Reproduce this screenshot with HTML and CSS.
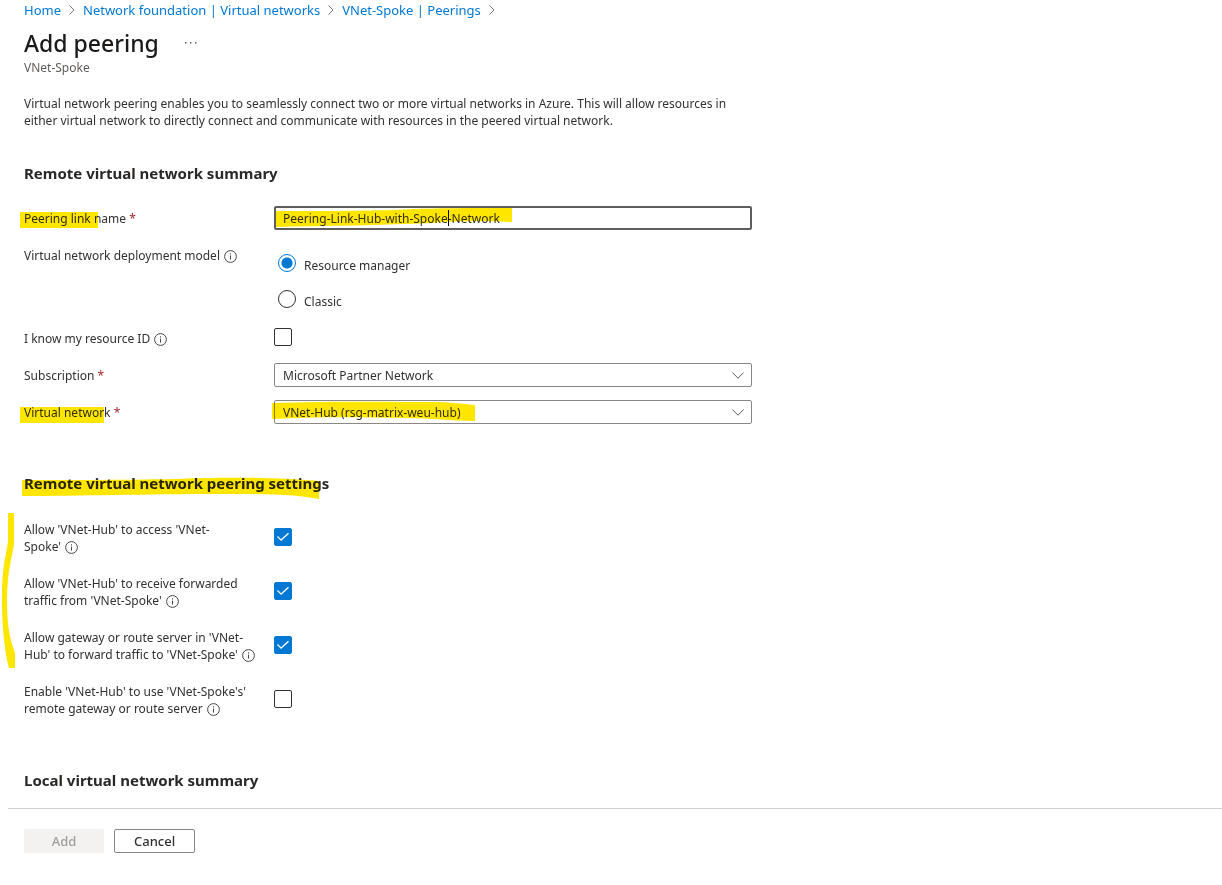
FILE: index.html
```
<!DOCTYPE html>
<html lang="en">
<head>
    <meta charset="UTF-8">
    <meta name="viewport" content="width=device-width, initial-scale=1.0">
    <title>Add peering</title>
    <link rel="stylesheet" href="styles.css">
</head>
<body>
    <!-- Shared icons -->
    <svg class="icon-defs" aria-hidden="true">
        <symbol id="info" viewBox="0 0 13 13">
            <circle cx="6.5" cy="6.5" r="5.9" fill="none" stroke="currentColor" />
            <path d="M6.5 5.6v4M6.5 3.3v1.2" fill="none" stroke="currentColor" />
        </symbol>
        <symbol id="chevron-right" viewBox="0 0 6 10">
            <path d="M0.5 0.5L5 5L0.5 9.5" fill="none" stroke="currentColor" />
        </symbol>
        <symbol id="chevron-down" viewBox="0 0 12 7">
            <path d="M0.4 0.5L6 6.2L11.6 0.5" fill="none" stroke="currentColor" />
        </symbol>
    </svg>

    <main class="content">
        <nav class="breadcrumb" aria-label="Breadcrumb">
            <a href="#">Home</a>
            <svg class="separator"><use href="#chevron-right" /></svg>
            <a href="#">Network foundation | Virtual networks</a>
            <svg class="separator"><use href="#chevron-right" /></svg>
            <a href="#">VNet-Spoke | Peerings</a>
            <svg class="separator"><use href="#chevron-right" /></svg>
        </nav>

        <header class="title-bar">
            <h1>Add peering</h1>
            <button class="more" type="button" aria-label="More actions">
                <svg viewBox="0 0 12 2"><path d="M0 0h1.5v1.5H0zM5 0h1.5v1.5H5zM10 0h1.5v1.5H10z" fill="currentColor" /></svg>
            </button>
        </header>
        <p class="subtitle">VNet-Spoke</p>

        <p class="description">Virtual network peering enables you to seamlessly connect two or more virtual networks in Azure. This will allow resources in either virtual network to directly connect and communicate with resources in the peered virtual network.</p>

        <form id="peeringForm">
            <h2>Remote virtual network summary</h2>
            <div class="summary-fields">
                <div class="row">
                    <label class="row-label" for="linkName">Peering link name <span class="required">*</span>
                        <svg class="marker marker-label" viewBox="0 0 84 18"><path d="M0 1H78V17H0Z" /></svg>
                    </label>
                    <div class="field">
                        <input class="text-box" id="linkName" type="text" value="Peering-Link-Hub-with-Spoke-Network">
                        <span class="caret"></span>
                        <svg class="marker marker-name" viewBox="0 0 238 22"><path d="M1 5C50 5 80 5 117 4C160 2 190 2 237 2V16C200 15 175 15 157 17C110 19 50 20 1 21Z" /></svg>
                    </div>
                </div>

                <div class="row" role="radiogroup" aria-labelledby="modelLabel">
                    <span class="row-label" id="modelLabel">Virtual network deployment model <svg class="info"><use href="#info" /></svg></span>
                    <div class="radio-group">
                        <label class="radio"><input type="radio" name="model" checked><span>Resource manager</span></label>
                        <label class="radio"><input type="radio" name="model"><span>Classic</span></label>
                    </div>
                </div>

                <div class="row">
                    <label class="row-label" for="resourceId">I know my resource ID <svg class="info"><use href="#info" /></svg></label>
                    <div class="field check-field"><input class="check" id="resourceId" type="checkbox"></div>
                </div>

                <div class="row">
                    <label class="row-label" for="subscription">Subscription <span class="required">*</span></label>
                    <div class="field">
                        <select class="drop-down" id="subscription"><option>Microsoft Partner Network</option></select>
                        <svg class="arrow"><use href="#chevron-down" /></svg>
                    </div>
                </div>

                <div class="row">
                    <label class="row-label" for="network">Virtual network <span class="required">*</span>
                        <svg class="marker marker-label" viewBox="0 0 84 18"><path d="M0 2H84V18H0Z" /></svg>
                    </label>
                    <div class="field">
                        <select class="drop-down" id="network"><option>VNet-Hub (rsg-matrix-weu-hub)</option></select>
                        <svg class="arrow"><use href="#chevron-down" /></svg>
                        <svg class="marker marker-network" viewBox="0 0 204 20"><path d="M0 2C60 0 120 1 160 1C180 1 190 3 203 4V20C180 20 160 17 130 17C80 16 40 16 0 18Z" /></svg>
                    </div>
                </div>
            </div>

            <h2>Remote virtual network peering settings
                <svg class="marker marker-heading" viewBox="0 0 298 22"><path d="M0 3C80 3 130 3 180 1C230 0 260 1 297 4V22C270 17 240 17 200 17C120 17 60 19 0 19Z" /></svg>
            </h2>
            <div class="settings-fields">
                <svg class="marker marker-bracket" viewBox="0 0 16 156"><path d="M8 0H14V31C12 44 7 60 7 86C7 110 9 124 15 140V155H9C6 144 2 120 2 86C2 52 6 44 8 28Z" /></svg>
                <div class="row">
                    <label class="row-label" for="allowAccess">Allow 'VNet-Hub' to access 'VNet-<br>Spoke' <svg class="info"><use href="#info" /></svg></label>
                    <div class="field"><input class="check" id="allowAccess" type="checkbox" checked></div>
                </div>
                <div class="row">
                    <label class="row-label" for="allowForwarded">Allow 'VNet-Hub' to receive forwarded<br>traffic from 'VNet-Spoke' <svg class="info"><use href="#info" /></svg></label>
                    <div class="field"><input class="check" id="allowForwarded" type="checkbox" checked></div>
                </div>
                <div class="row">
                    <label class="row-label" for="allowGateway">Allow gateway or route server in 'VNet-<br>Hub' to forward traffic to 'VNet-Spoke' <svg class="info"><use href="#info" /></svg></label>
                    <div class="field"><input class="check" id="allowGateway" type="checkbox" checked></div>
                </div>
                <div class="row">
                    <label class="row-label" for="useGateway">Enable 'VNet-Hub' to use 'VNet-Spoke's'<br>remote gateway or route server <svg class="info"><use href="#info" /></svg></label>
                    <div class="field"><input class="check" id="useGateway" type="checkbox"></div>
                </div>
            </div>

            <h2>Local virtual network summary</h2>
        </form>
    </main>

    <footer class="actions">
        <button class="btn" type="submit" form="peeringForm" disabled>Add</button>
        <button class="btn" type="button">Cancel</button>
    </footer>
</body>
</html>
```
FILE: styles.css
```
* {
    box-sizing: border-box;
}
body {
    margin: 0;
    height: 100vh;
    display: flex;
    flex-direction: column;
    background-color: #fff;
    color: #323130;
    font-family: "Segoe UI", "Noto Sans", sans-serif;
    font-size: 12px;
    line-height: 17px;
}
h1, h2, p {
    margin: 0;
}
input, select, button {
    margin: 0;
    font: inherit;
    color: inherit;
}
.icon-defs {
    display: none;
}
.content {
    flex: 1;
    min-height: 0;
    overflow: hidden;
    padding: 0 24px;
}

/* Header */
.breadcrumb {
    display: flex;
    align-items: center;
    gap: 8px;
    height: 20px;
    font-size: 13px;
}
.breadcrumb a {
    color: #0078d4;
    text-decoration: none;
}
.separator {
    width: 6px;
    height: 10px;
    color: #797775;
}
.title-bar {
    display: flex;
    align-items: center;
    gap: 24px;
    padding-top: 7px;
}
h1 {
    font-size: 23px;
    font-weight: 500;
    line-height: 32px;
    color: #1b1a19;
}
.more {
    display: flex;
    padding: 2px;
    border: none;
    background: none;
    color: #605e5c;
}
.more svg {
    width: 12px;
    height: 2px;
}
.subtitle {
    font-size: 12px;
    color: #605e5c;
}
.description {
    max-width: 728px;
    padding-top: 19px;
}

/* Form */
h2 {
    position: relative;
    font-size: 15px;
    font-weight: 700;
    line-height: 20px;
    color: #292827;
    margin: 34px 0 23px;
}
.summary-fields {
    display: grid;
    gap: 13px;
    margin-bottom: 49px;
}
.settings-fields {
    position: relative;
    display: grid;
    gap: 20px;
    margin: 28px 0 53px;
}
.row {
    display: grid;
    grid-template-columns: 242px minmax(0, 478px);
    column-gap: 8px;
}
.row-label {
    position: relative;
    white-space: nowrap;
}
.summary-fields .row-label {
    padding-top: 4px;
}
.required {
    color: #a4262c;
}
.info {
    width: 13px;
    height: 13px;
    margin-left: 1px;
    vertical-align: -3px;
    color: #484644;
}
.field {
    position: relative;
    display: flex;
    align-items: center;
}
.settings-fields .field {
    padding-bottom: 2px;
}
.check-field {
    min-height: 24px;
    padding-bottom: 2px;
}
.text-box,
.drop-down {
    width: 100%;
    height: 24px;
    border: 1px solid #8a8886;
    border-radius: 2px;
    padding: 0 8px;
    background-color: #fff;
    appearance: none;
    outline: none;
}
.text-box {
    border: 2px solid #605e5c;
    padding: 0 7px;
}
.arrow {
    position: absolute;
    right: 8px;
    top: 9px;
    width: 12px;
    height: 7px;
    color: #605e5c;
    pointer-events: none;
}
.caret {
    position: absolute;
    left: 174px;
    top: 4px;
    width: 1px;
    height: 16px;
    background-color: #000;
}
.radio-group {
    display: grid;
    gap: 18px;
    padding: 11px 4px 5px;
}
.radio {
    display: flex;
    gap: 8px;
    height: 18px;
    line-height: 23px;
}
.radio input {
    flex: none;
    width: 18px;
    height: 18px;
    border: 1px solid #323130;
    border-radius: 50%;
    appearance: none;
}
.radio input:checked {
    border-color: #0078d4;
    background: radial-gradient(circle, #0078d4 5px, #fff 6px);
}
.check {
    width: 18px;
    height: 18px;
    border: 1px solid #323130;
    border-radius: 2px;
    appearance: none;
}
.check:checked {
    display: grid;
    place-items: center;
    border-color: #0078d4;
    background-color: #0078d4;
}
.check:checked::before {
    content: "";
    width: 12px;
    height: 9px;
    background-color: #fff;
    clip-path: polygon(0 50%, 8% 40%, 34% 76%, 92% 4%, 100% 13%, 34% 94%);
}

/* Highlighter strokes drawn over the form */
.marker {
    position: absolute;
    fill: #ffe600;
    mix-blend-mode: multiply;
    pointer-events: none;
}
.marker-label {
    left: -4px;
    top: 5px;
    width: 84px;
    height: 18px;
}
.marker-name {
    left: 1px;
    top: 0;
    width: 238px;
    height: 22px;
}
.marker-network {
    left: -2px;
    top: 1px;
    width: 204px;
    height: 20px;
}
.marker-heading {
    left: -2px;
    top: 4px;
    width: 298px;
    height: 22px;
}
.marker-bracket {
    left: -24px;
    top: -8px;
    width: 16px;
    height: 156px;
}

/* Footer */
.actions {
    display: flex;
    gap: 10px;
    margin-left: 8px;
    padding: 20px 16px 32px;
    border-top: 1px solid #d2d0ce;
}
.btn {
    min-width: 80px;
    height: 24px;
    padding: 0 19px;
    border: 1px solid #8a8886;
    border-radius: 2px;
    background-color: #fff;
    font-size: 13px;
    font-weight: 500;
    line-height: 22px;
}
.btn:disabled {
    border-color: #f3f2f1;
    background-color: #f3f2f1;
    color: #a19f9d;
}
```
